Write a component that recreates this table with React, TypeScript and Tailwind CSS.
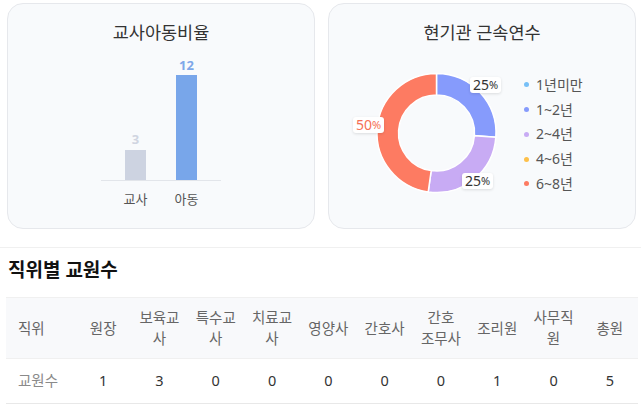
import React from "react";

const CX = 86.5;
const CY = 73;
const RO = 59.5;
const RI = 38;

function pt(r: number, deg: number): [number, number] {
  const a = (deg * Math.PI) / 180;
  return [CX + r * Math.sin(a), CY - r * Math.cos(a)];
}

function arcPath(s: number, e: number): string {
  const [x1, y1] = pt(RO, s);
  const [x2, y2] = pt(RO, e);
  const [x3, y3] = pt(RI, e);
  const [x4, y4] = pt(RI, s);
  const large = e - s > 180 ? 1 : 0;
  return `M${x1} ${y1} A${RO} ${RO} 0 ${large} 1 ${x2} ${y2} L${x3} ${y3} A${RI} ${RI} 0 ${large} 0 ${x4} ${y4} Z`;
}

const segments = [
  { s: 0, e: 94, c: "#869bfc" },
  { s: 94, e: 188, c: "#c8abf4" },
  { s: 188, e: 360, c: "#fd7b62" },
];

const legend = [
  { label: "1년미만", c: "#77c0f7" },
  { label: "1~2년", c: "#869bfc" },
  { label: "2~4년", c: "#c8abf4" },
  { label: "4~6년", c: "#fdc04a" },
  { label: "6~8년", c: "#fd7b62" },
];

const headers: string[][] = [
  ["직위"],
  ["원장"],
  ["보육교", "사"],
  ["특수교", "사"],
  ["치료교", "사"],
  ["영양사"],
  ["간호사"],
  ["간호", "조무사"],
  ["조리원"],
  ["사무직", "원"],
  ["총원"],
];

const values = ["1", "3", "0", "0", "0", "0", "0", "1", "0", "5"];

function PctLabel({ v, className, color }: { v: string; className: string; color: string }) {
  return (
    <div
      className={`absolute h-[16px] px-[3px] flex items-center rounded-[3px] bg-white shadow-[0_1px_3px_rgba(0,0,0,0.12)] whitespace-nowrap ${className}`}
    >
      <span className={`text-[14px] leading-[16px] ${color}`}>{v}</span>
      <span className={`text-[11px] leading-[16px] ${color}`}>%</span>
    </div>
  );
}

export default function App() {
  return (
    <div className="w-[641px] h-[408px] overflow-hidden bg-white font-['Noto_Sans','Noto_Sans_CJK_KR',sans-serif] text-[#333]">
      <div className="flex gap-[13px] pl-[7px] pt-[3px]">
        {/* Left card */}
        <div className="w-[308px] h-[226px] rounded-2xl border border-[#e6e8ec] bg-[#f8fafc]">
          <div className="pt-[16px] text-center text-[17.5px] leading-[24px] text-[#333]">교사아동비율</div>
          <div className="mx-auto w-[120px]">
            <div className="flex justify-center items-end gap-[30px] h-[137px] border-b border-[#e2e5ea]">
              <div className="w-[21px] flex flex-col items-center">
                <div className="text-[13px] leading-[16px] font-bold text-[#d0d5e1] mb-[3px]">3</div>
                <div className="w-[21px] h-[30px] bg-[#cdd3e1]" />
              </div>
              <div className="w-[21px] flex flex-col items-center">
                <div className="text-[13px] leading-[16px] font-bold text-[#7ea7e9] mb-[2px]">12</div>
                <div className="w-[21px] h-[105px] bg-[#78a6ea]" />
              </div>
            </div>
            <div className="flex justify-center gap-[30px] mt-[9px]">
              <div className="w-[21px] flex justify-center whitespace-nowrap text-[13px] leading-[18px] text-[#555]">교사</div>
              <div className="w-[21px] flex justify-center whitespace-nowrap text-[13px] leading-[18px] text-[#555]">아동</div>
            </div>
          </div>
        </div>

        {/* Right card */}
        <div className="w-[308px] h-[226px] rounded-2xl border border-[#e6e8ec] bg-[#f8fafc]">
          <div className="pt-[16px] text-center text-[17.5px] leading-[24px] text-[#333]">현기관 근속연수</div>
          <div className="flex items-start mt-[16px] ml-[21px]">
            <div className="relative w-[170px] h-[146px]">
              <svg width="170" height="146" viewBox="0 0 170 146">
                {segments.map((s, i) => (
                  <path key={i} d={arcPath(s.s, s.e)} fill={s.c} stroke="#ffffff" strokeWidth="1.5" />
                ))}
              </svg>
              <PctLabel v="25" className="left-[120px] top-[17px]" color="text-[#333]" />
              <PctLabel v="25" className="left-[112px] top-[113px]" color="text-[#333]" />
              <PctLabel v="50" className="left-[3px] top-[57px]" color="text-[#f56f55]" />
            </div>
            <div className="ml-[4px] mt-[12.5px] flex flex-col">
              {legend.map((l) => (
                <div key={l.label} className="h-[24.75px] flex items-center gap-[7px]">
                  <span className="w-[5px] h-[5px] rounded-full" style={{ backgroundColor: l.c }} />
                  <span className="text-[14px] leading-[18px] text-[#555] whitespace-nowrap">{l.label}</span>
                </div>
              ))}
            </div>
          </div>
        </div>
      </div>

      {/* Divider */}
      <div className="mt-[18px] border-t border-[#f0f0f0]" />

      <div className="pl-[8px] pt-[10px] text-[19px] leading-[24px] font-bold text-[#111]">직위별 교원수</div>

      <div className="ml-[6px] mt-[15px] w-[632px]">
        <table className="w-[632px] table-fixed border-collapse">
          <colgroup>
            <col className="w-[69px]" />
            {values.map((_, i) => (
              <col key={i} />
            ))}
          </colgroup>
          <thead>
            <tr className="bg-[#f8f9fb] border-t border-[#e8e8e8] border-b border-[#f0f0f0]">
              {headers.map((h, i) => (
                <th
                  key={i}
                  className={`h-[61px] py-0 font-normal text-[14.5px] leading-[21px] text-[#666] ${
                    i === 0 ? "text-left pl-[12px]" : "text-center px-[2px]"
                  }`}
                >
                  {h.map((line, j) => (
                    <div key={j} className="whitespace-nowrap">
                      {line}
                    </div>
                  ))}
                </th>
              ))}
            </tr>
          </thead>
          <tbody>
            <tr className="border-b border-[#e8e8e8]">
              <td className="h-[45px] pl-[12px] text-left text-[14.5px] text-[#8a8a8a]">교원수</td>
              {values.map((v, i) => (
                <td key={i} className="h-[45px] text-center text-[14.5px] text-[#333]">
                  {v}
                </td>
              ))}
            </tr>
          </tbody>
        </table>
      </div>
    </div>
  );
}
